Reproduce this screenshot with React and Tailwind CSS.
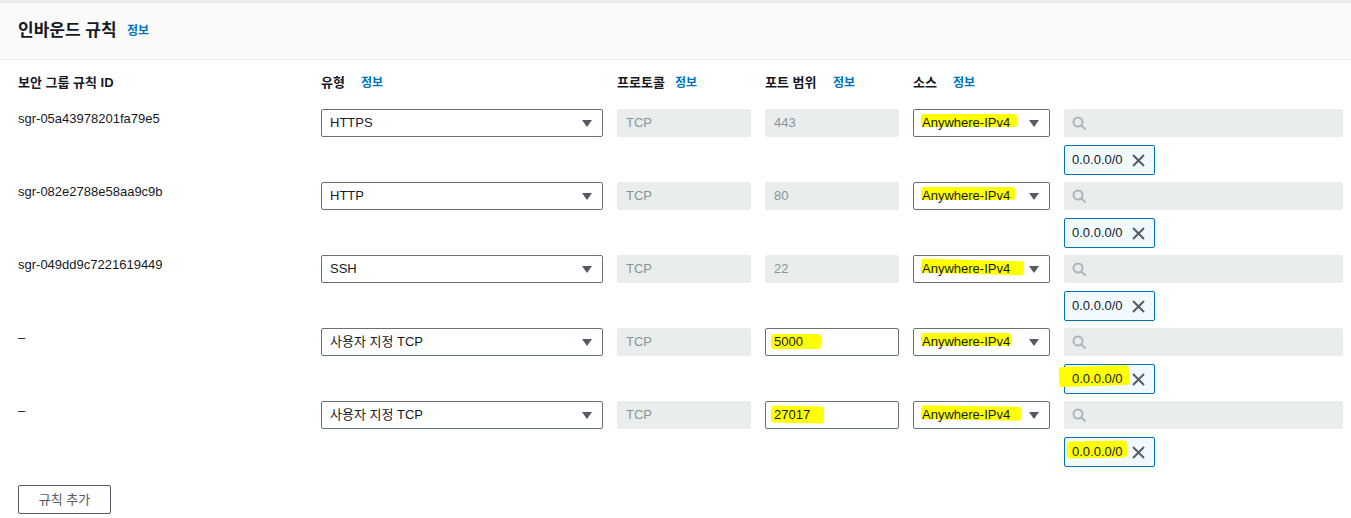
import React from 'react';

const rows = [
  { id: 'sgr-05a43978201fa79e5', type: 'HTTPS', port: '443', edit: false, srcHl: 'top-[1px] bottom-[6px] -left-[1px] -right-[7px]', tokenHl: null },
  { id: 'sgr-082e2788e58aa9c9b', type: 'HTTP', port: '80', edit: false, srcHl: 'top-[1px] bottom-[6px] -left-[1px] -right-[5px]', tokenHl: null },
  { id: 'sgr-049dd9c7221619449', type: 'SSH', port: '22', edit: false, srcHl: 'top-[1px] bottom-[5px] -left-[1px] -right-[14px] rotate-[1.5deg]', tokenHl: null },
  { id: '–', type: '사용자 지정 TCP', port: '5000', edit: true, portHl: 'top-[2px] bottom-[3px] -left-[3px] -right-[18px]', srcHl: 'top-[1px] bottom-[6px] -left-[1px] -right-[1px]', tokenHl: 'left-[-6px] top-[1px] w-[70px] h-[20px] -rotate-[2deg]' },
  { id: '–', type: '사용자 지정 TCP', port: '27017', edit: true, portHl: 'top-[1px] bottom-[2px] -left-[3px] -right-[14px] rotate-[1.5deg]', srcHl: 'top-[1px] bottom-[5px] -left-[1px] -right-[11px] rotate-[1deg]', tokenHl: 'left-[2px] top-[3px] w-[60px] h-[17px] -rotate-[1deg]' },
];

const Caret = () => (
  <svg width="10" height="7" viewBox="0 0 10 7" className="shrink-0">
    <polygon points="0,0 10,0 5,7" fill="#545b64" />
  </svg>
);

const Search = () => (
  <svg width="14" height="14" viewBox="0 0 14 14" fill="none" stroke="#aab7b8" strokeWidth="2" strokeLinecap="round">
    <circle cx="6" cy="6" r="4.5" />
    <line x1="9.5" y1="9.5" x2="13" y2="13" />
  </svg>
);

const Close = () => (
  <svg width="13" height="13" viewBox="0 0 13 13" fill="none" stroke="#545b64" strokeWidth="2">
    <line x1="1" y1="1" x2="12" y2="12" />
    <line x1="12" y1="1" x2="1" y2="12" />
  </svg>
);

const Mark = ({ hl, children }) => (
  <span className="relative inline-block">
    <span className={`absolute rounded-[3px] bg-[#ffff00] ${hl}`} />
    <span className="relative">{children}</span>
  </span>
);

const Info = () => <span className="text-[12px] font-bold text-[#0073bb]">정보</span>;

export default function App() {
  return (
    <div className="w-full h-[518px] bg-white border-t-[3px] border-[#eaeded] text-[13px] text-[#16191f] font-['Liberation_Sans','Noto_Sans_CJK_KR',sans-serif] leading-5">
      {/* Header */}
      <div className="h-[57px] bg-[#fafafa] border-b border-[#eaeded] flex items-center px-[18px] pb-[1px]">
        <span className="inline-block w-[109px] text-[17px] font-bold">인바운드 규칙</span>
        <Info />
      </div>

      <div className="pl-[18px] pr-[8px] pt-[13px]">
        {/* Column labels */}
        <div className="grid grid-cols-[289px_282px_134px_134px_137px_279px] gap-x-[14px] font-bold h-5 items-center">
          <div>보안 그룹 규칙 ID</div>
          <div className="flex items-center"><span className="inline-block w-[40px]">유형</span><Info /></div>
          <div className="flex items-center"><span className="inline-block w-[58px]">프로토콜</span><Info /></div>
          <div className="flex items-center"><span className="inline-block w-[68px]">포트 범위</span><Info /></div>
          <div className="flex items-center"><span className="inline-block w-[40px]">소스</span><Info /></div>
          <div />
        </div>

        <div className="mt-[16px] flex flex-col gap-[7px]">
          {rows.map((r, i) => (
            <div key={i} className="grid grid-cols-[289px_282px_134px_134px_137px_279px] gap-x-[14px] items-start">
              <div>{r.id}</div>
              <div className="h-[28px] border border-[#687078] rounded-[2px] flex items-center justify-between pl-[8px] pr-[10px]">
                <span>{r.type}</span>
                <Caret />
              </div>
              <div className="h-[28px] bg-[#eaeded] rounded-[2px] flex items-center px-[9px] text-[#879596]">TCP</div>
              {r.edit ? (
                <div className="h-[28px] border border-[#687078] rounded-[2px] flex items-center px-[8px]">
                  <Mark hl={r.portHl}>{r.port}</Mark>
                </div>
              ) : (
                <div className="h-[28px] bg-[#eaeded] rounded-[2px] flex items-center px-[9px] text-[#879596]">{r.port}</div>
              )}
              <div className="h-[28px] border border-[#687078] rounded-[2px] flex items-center justify-between pl-[8px] pr-[10px]">
                <Mark hl={r.srcHl}>Anywhere-IPv4</Mark>
                <Caret />
              </div>
              <div className="flex flex-col items-start gap-[8px]">
                <div className="w-full h-[28px] bg-[#eaeded] rounded-[2px] flex items-center pl-[8px]">
                  <Search />
                </div>
                <div className="relative h-[30px] w-[91px] border border-[#0073bb] bg-[#f1faff] rounded-[2px] flex items-center justify-between pl-[7px] pr-[9px]">
                  {r.tokenHl && <span className={`absolute rounded-[3px] bg-[#ffff00] ${r.tokenHl}`} />}
                  <span className="relative">0.0.0.0/0</span>
                  <span className="relative"><Close /></span>
                </div>
              </div>
            </div>
          ))}
        </div>

        <button className="mt-[18px] h-[29px] w-[93px] border border-[#545b64] rounded-[2px] text-[#545b64] flex items-center justify-center">
          규칙 추가
        </button>
      </div>
    </div>
  );
}
